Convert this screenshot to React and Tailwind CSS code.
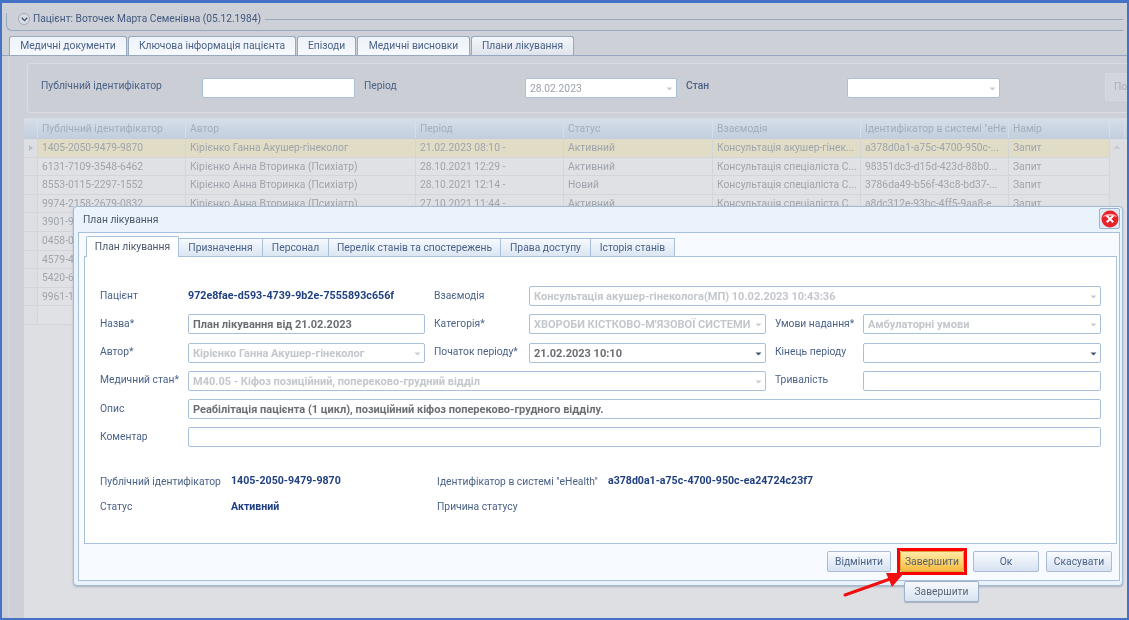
import React from "react";

const cols = "grid grid-cols-[14px_148px_230px_148px_149px_148px_148px_101px_15px]";
const rows = [
  ["1405-2050-9479-9870", "Кірієнко Ганна Акушер-гінеколог", "21.02.2023 08:10 -", "Активний", "Консультація акушер-гінек...", "a378d0a1-a75c-4700-950c-...", "Запит"],
  ["6131-7109-3548-6462", "Кірієнко Анна Вторинка (Психіатр)", "28.10.2021 12:29 -", "Активний", "Консультація спеціаліста С...", "98351dc3-d15d-423d-88b0...", "Запит"],
  ["8553-0115-2297-1552", "Кірієнко Анна Вторинка (Психіатр)", "28.10.2021 12:14 -", "Новий", "Консультація спеціаліста С...", "3786da49-b56f-43c8-bd37-...", "Запит"],
  ["9974-2158-2679-0832", "Кірієнко Анна Вторинка (Психіатр)", "27.10.2021 11:44 -", "Активний", "Консультація спеціаліста С...", "a8dc312e-93bc-4ff5-9aa8-e...", "Запит"],
  ["3901-9"], ["0458-0"], ["4579-4"], ["5420-6"], ["9961-1"], [""],
];

function Caret({ dark }) {
  return (
    <svg width="7" height="4" viewBox="0 0 7 4" className="absolute right-[3px] top-[8px]">
      <path d="M0.5 0.5H6.5L3.5 3.5Z" fill={dark ? "#3d5475" : "#c7ccd4"} />
    </svg>
  );
}

function Field({ text, caret, dark, tone = "dis", span = "" }) {
  const color = tone === "dis" ? "text-[#c3c7cc]" : "text-[#6b6f73]";
  return (
    <div className={`relative h-[20px] min-w-0 rounded-[2px] border border-[#a9c0dc] bg-white pl-[4px] text-[11px] leading-[20px] font-bold whitespace-nowrap overflow-hidden ${color} ${span}`}>
      {text}
      {caret && <Caret dark={dark} />}
    </div>
  );
}

function Lab({ children, span = "" }) {
  return <div className={`pt-[1.5px] text-[10.3px] leading-[16px] text-[#4a6288] whitespace-nowrap ${span}`}>{children}</div>;
}

function Btn({ children, hot, w }) {
  return (
    <div className={`flex h-[21px] items-center justify-center rounded-[2px] border text-[10.3px] ${w} ${hot ? "border-[#d9a63a] bg-gradient-to-b from-[#fbe9a8] via-[#fbd56c] to-[#f6b93f] text-[#58606c]" : "border-[#a9bcd4] bg-gradient-to-b from-[#f9fbfe] to-[#d6e2f1] text-[#4a6288]"}`}>
      {children}
    </div>
  );
}

export default function App() {
  return (
    <div className="relative h-[620px] w-[1129px] overflow-hidden border-x-2 border-b-2 border-t-[3px] border-[#4472c4] bg-[#cdd0d7] font-['Roboto',sans-serif] blur-[0.35px]">
      <div className="flex h-full flex-col">
        <div className="mx-[4px] mt-[10px] h-[18px] rounded-bl-[6px] border-b border-l border-[#97a9c1]">
          <div className="flex h-[12px] items-center pl-[11px]">
            <div className="flex h-[12px] w-[12px] items-center justify-center rounded-full border border-[#a4aab4] bg-[#d9dce1]">
              <svg width="7" height="5" viewBox="0 0 7 5"><path d="M0.8 0.8L3.5 3.6L6.2 0.8" fill="none" stroke="#3c4f6e" strokeWidth="1.3" /></svg>
            </div>
            <span className="ml-[3px] mr-[4px] text-[10.2px] text-[#42597f]">Пацієнт: Воточек Марта Семенівна (05.12.1984)</span>
            <div className="h-px flex-1 bg-[#97a9c1]" />
          </div>
        </div>

        <div className="mt-[5px] flex h-[20px] gap-px border-b border-[#97a9c1] pl-[7px]">
          {[["Медичні документи", "w-[118px]"], ["Ключова інформація пацієнта", "w-[168px]"], ["Епізоди", "w-[59px]"], ["Медичні висновки", "w-[113px]"], ["Плани лікування", "w-[103px]"]].map(([t, w], i) => (
            <div key={t} className={`${w} flex items-center justify-center rounded-t-[3px] border border-b-0 border-[#97a9c1] bg-gradient-to-b ${i === 4 ? "from-[#f4f7fb] to-[#dfe4ec]" : "from-[#eef3fa] to-[#f6f9fd]"} text-[10.3px] text-[#4a6288]`}>{t}</div>
          ))}
        </div>

        <div className="ml-[6px] flex min-h-0 flex-1 flex-col border-l border-[#d4d7dd] bg-[#cdd0d7] pl-[15px]">
          <div className="ml-[3px] mt-[7px] flex h-[50px] items-start overflow-hidden rounded-l-[3px] border-y border-l border-[#d9dde3] bg-[#cbced5] pl-[13px] pt-[14px]">
            <span className="w-[161px] shrink-0 text-[10.3px] leading-[16px] text-[#4a6288]">Публічний ідентифікатор</span>
            <div className="h-[20px] w-[153px] shrink-0 rounded-[2px] border border-[#a9c0dc] bg-white" />
            <span className="ml-[9px] w-[161px] shrink-0 text-[10.3px] leading-[16px] text-[#4a6288]">Період</span>
            <div className="relative h-[20px] w-[152px] shrink-0 rounded-[2px] border border-[#a9c0dc] bg-white pl-[4px] text-[10.3px] leading-[20px] text-[#9ba1aa]">28.02.2023<Caret /></div>
            <span className="ml-[9px] w-[161px] shrink-0 text-[10.3px] font-medium leading-[16px] text-[#4a6288]">Стан</span>
            <div className="relative h-[20px] w-[153px] shrink-0 rounded-[2px] border border-[#a9c0dc] bg-white"><Caret /></div>
            <div className="ml-[105px] -mt-[5px] h-[28px] w-[24px] shrink-0 rounded-l-[2px] border-y border-l border-[#d6dae0] bg-[#d2d5db] pl-[8px] text-[10.3px] leading-[26px] text-[#aab0b9]">По</div>
          </div>

          <div className="mt-[5px] flex-1 bg-[#dddfe2]">
            <div className={`${cols} h-[21px] border-b border-[#c2cedd] bg-gradient-to-b from-[#d6dee8] to-[#c3cfde] text-[10.3px] leading-[21px] text-[#a4adba]`}>
              {["", "Публічний ідентифікатор", "Автор", "Період", "Статус", "Взаємодія", "Ідентифікатор в системі \"eHe", "Намір", ""].map((h, i) => (
                <div key={i} className="overflow-hidden whitespace-nowrap border-r border-[#d6deea] pl-[4px]">{h}</div>
              ))}
            </div>
            {rows.map((r, i) => (
              <div key={i} className={`${cols} h-[18.6px] text-[10.3px] leading-[17.6px] text-[#a0a5ac]`}>
                <div className="flex items-center justify-center border-b border-r border-[#d2d5da] bg-[#dddfe3]">
                  {i === 0 && <svg width="4" height="6" viewBox="0 0 4 6"><path d="M0 0L4 3L0 6Z" fill="#b4becb" /></svg>}
                </div>
                {[0, 1, 2, 3, 4, 5, 6].map((c) => (
                  <div key={c} className={`overflow-hidden whitespace-nowrap border-b border-r border-[#d2d5da] pl-[4px] ${i === 0 ? "bg-[#e0dcc6]" : "bg-[#dfe1e5]"}`}>{r[c] || ""}</div>
                ))}
                <div className="bg-[#dcdee2] pl-[3px]">
                  {i === 0 && <svg width="8" height="6" viewBox="0 0 8 6" className="mt-[5px]"><path d="M0.5 5L4 1L7.5 5Z" fill="#c6ccd4" /></svg>}
                </div>
              </div>
            ))}
          </div>
        </div>
      </div>

      {/* dialog */}
      <div className="absolute left-[71px] top-[203px] flex h-[380px] w-[1050px] flex-col rounded-[4px] border border-[#a3bad6] bg-[#eaf2fc] pb-[4px] pl-[4px] pr-[2px] shadow-[0_1px_2px_rgba(90,110,140,0.4)]">
        <div className="relative h-[25px] shrink-0 pl-[5px] text-[10.3px] leading-[26px] text-[#4a5669]">
          План лікування
          <div className="absolute right-0 top-[1px] flex h-[21px] w-[21px] items-center justify-center rounded-[2px] border border-[#9db3cf] bg-[#dfe8f3]">
            <svg width="18" height="18" viewBox="0 0 18 18">
              <circle cx="9" cy="9" r="8.5" fill="#e7232a" />
              <path d="M1.5 7C4 2.5 14 2.5 16.5 7C12 5.5 6 5.5 1.5 7Z" fill="#f8a0a0" />
              <path d="M5.8 5.8L12.2 12.2M12.2 5.8L5.8 12.2" stroke="#fff" strokeWidth="2" />
            </svg>
          </div>
        </div>
        <div className="flex min-h-0 flex-1 flex-col border border-[#a9c0dc] bg-[#f7faff] pl-[5px] pr-[2px] pt-[3px]">
          <div className="z-10 flex h-[21px] shrink-0 items-end pl-[2px]">
            <div className="flex h-[21px] w-[93px] items-center justify-center rounded-t-[2px] border border-b-0 border-[#a9c0dc] bg-white text-[10.3px] text-[#4a5669]">План лікування</div>
            {[["Призначення", "w-[84px]"], ["Персонал", "w-[66px]"], ["Перелік станів та спостережень", "w-[172px]"], ["Права доступу", "w-[90px]"], ["Історія станів", "w-[84px]"]].map(([t, w]) => (
              <div key={t} className={`${w} flex h-[19px] items-center justify-center border border-l-0 border-[#a9c0dc] bg-gradient-to-b from-[#f6f9fd] to-[#dbe6f3] pt-px text-[10.3px] text-[#4a6288]`}>{t}</div>
            ))}
          </div>
          <div className="-mt-px h-[288px] shrink-0 border border-[#a9c0dc] bg-white pl-[15px] pt-[29px]">
            <div className="grid grid-cols-[88px_237px_104px_237px_97px_238px] grid-rows-[repeat(6,20px)] gap-y-[8.3px]">
              <Lab>Пацієнт</Lab>
              <div className="pt-[1.5px] text-[10.7px] font-bold leading-[16px] text-[#1f3f80]">972e8fae-d593-4739-9b2e-7555893c656f</div>
              <Lab span="ml-[9px]">Взаємодія</Lab>
              <Field span="col-span-3" caret text="Консультація акушер-гінеколога(МП) 10.02.2023 10:43:36" />

              <Lab>Назва*</Lab>
              <Field tone="on" text="План лікування від 21.02.2023" />
              <Lab span="ml-[9px]">Категорія*</Lab>
              <Field caret text="ХВОРОБИ КІСТКОВО-М'ЯЗОВОЇ СИСТЕМИ" />
              <Lab span="ml-[9px]">Умови надання*</Lab>
              <Field caret text="Амбулаторні умови" />

              <Lab>Автор*</Lab>
              <Field caret text="Кірієнко Ганна Акушер-гінеколог" />
              <Lab span="ml-[9px]">Початок періоду*</Lab>
              <Field tone="on" caret dark text="21.02.2023 10:10" />
              <Lab span="ml-[9px]">Кінець періоду</Lab>
              <Field caret dark text="" />

              <Lab>Медичний стан*</Lab>
              <Field span="col-span-3" caret text="M40.05 - Кіфоз позиційний, попереково-грудний відділ" />
              <Lab span="ml-[9px]">Тривалість</Lab>
              <Field text="" />

              <Lab>Опис</Lab>
              <Field span="col-span-5" tone="on" text="Реабілітація пацієнта (1 цикл), позиційний кіфоз попереково-грудного відділу." />

              <Lab>Коментар</Lab>
              <Field span="col-span-5" text="" />
            </div>

            <div className="mt-[25px] grid grid-cols-[131px_206px_171px_1fr] gap-y-[8px] text-[10.6px] leading-[16px]">
              <Lab>Публічний ідентифікатор</Lab>
              <div className="pt-px font-bold text-[#1f3f80]">1405-2050-9479-9870</div>
              <Lab>Ідентифікатор в системі "eHealth"</Lab>
              <div className="pt-px font-bold text-[#1f3f80]">a378d0a1-a75c-4700-950c-ea24724c23f7</div>
              <Lab>Статус</Lab>
              <div className="pt-px font-bold text-[#1f3f80]">Активний</div>
              <Lab>Причина статусу</Lab>
              <div />
            </div>
          </div>
          <div className="flex flex-1 items-center justify-end gap-[7px] pr-[5px] pb-[1px]">
            <Btn w="w-[64px]">Відмінити</Btn>
            <div className="border-[3px] border-[#f00] -mx-px"><Btn hot w="w-[64px]">Завершити</Btn></div>
            <Btn w="w-[66px]">Ок</Btn>
            <Btn w="w-[66px]">Скасувати</Btn>
          </div>
        </div>
      </div>

      {/* tooltip */}
      <div className="absolute left-[902px] top-[578px] flex h-[21px] w-[75px] items-center justify-center rounded-[2px] border border-[#9fb2cb] bg-gradient-to-b from-[#f6f9fd] to-[#d8e3f1] text-[10.3px] text-[#5a6675] shadow-[0_1px_1px_rgba(90,110,140,0.4)]">Завершити</div>

      {/* arrow */}
      <svg className="absolute left-[840px] top-[565px]" width="70" height="32" viewBox="0 0 70 32">
        <path d="M3 27L48 11" stroke="#f01010" strokeWidth="3" strokeLinecap="round" />
        <path d="M62 5L44 5L50 19Z" fill="#f01010" />
      </svg>
    </div>
  );
}
